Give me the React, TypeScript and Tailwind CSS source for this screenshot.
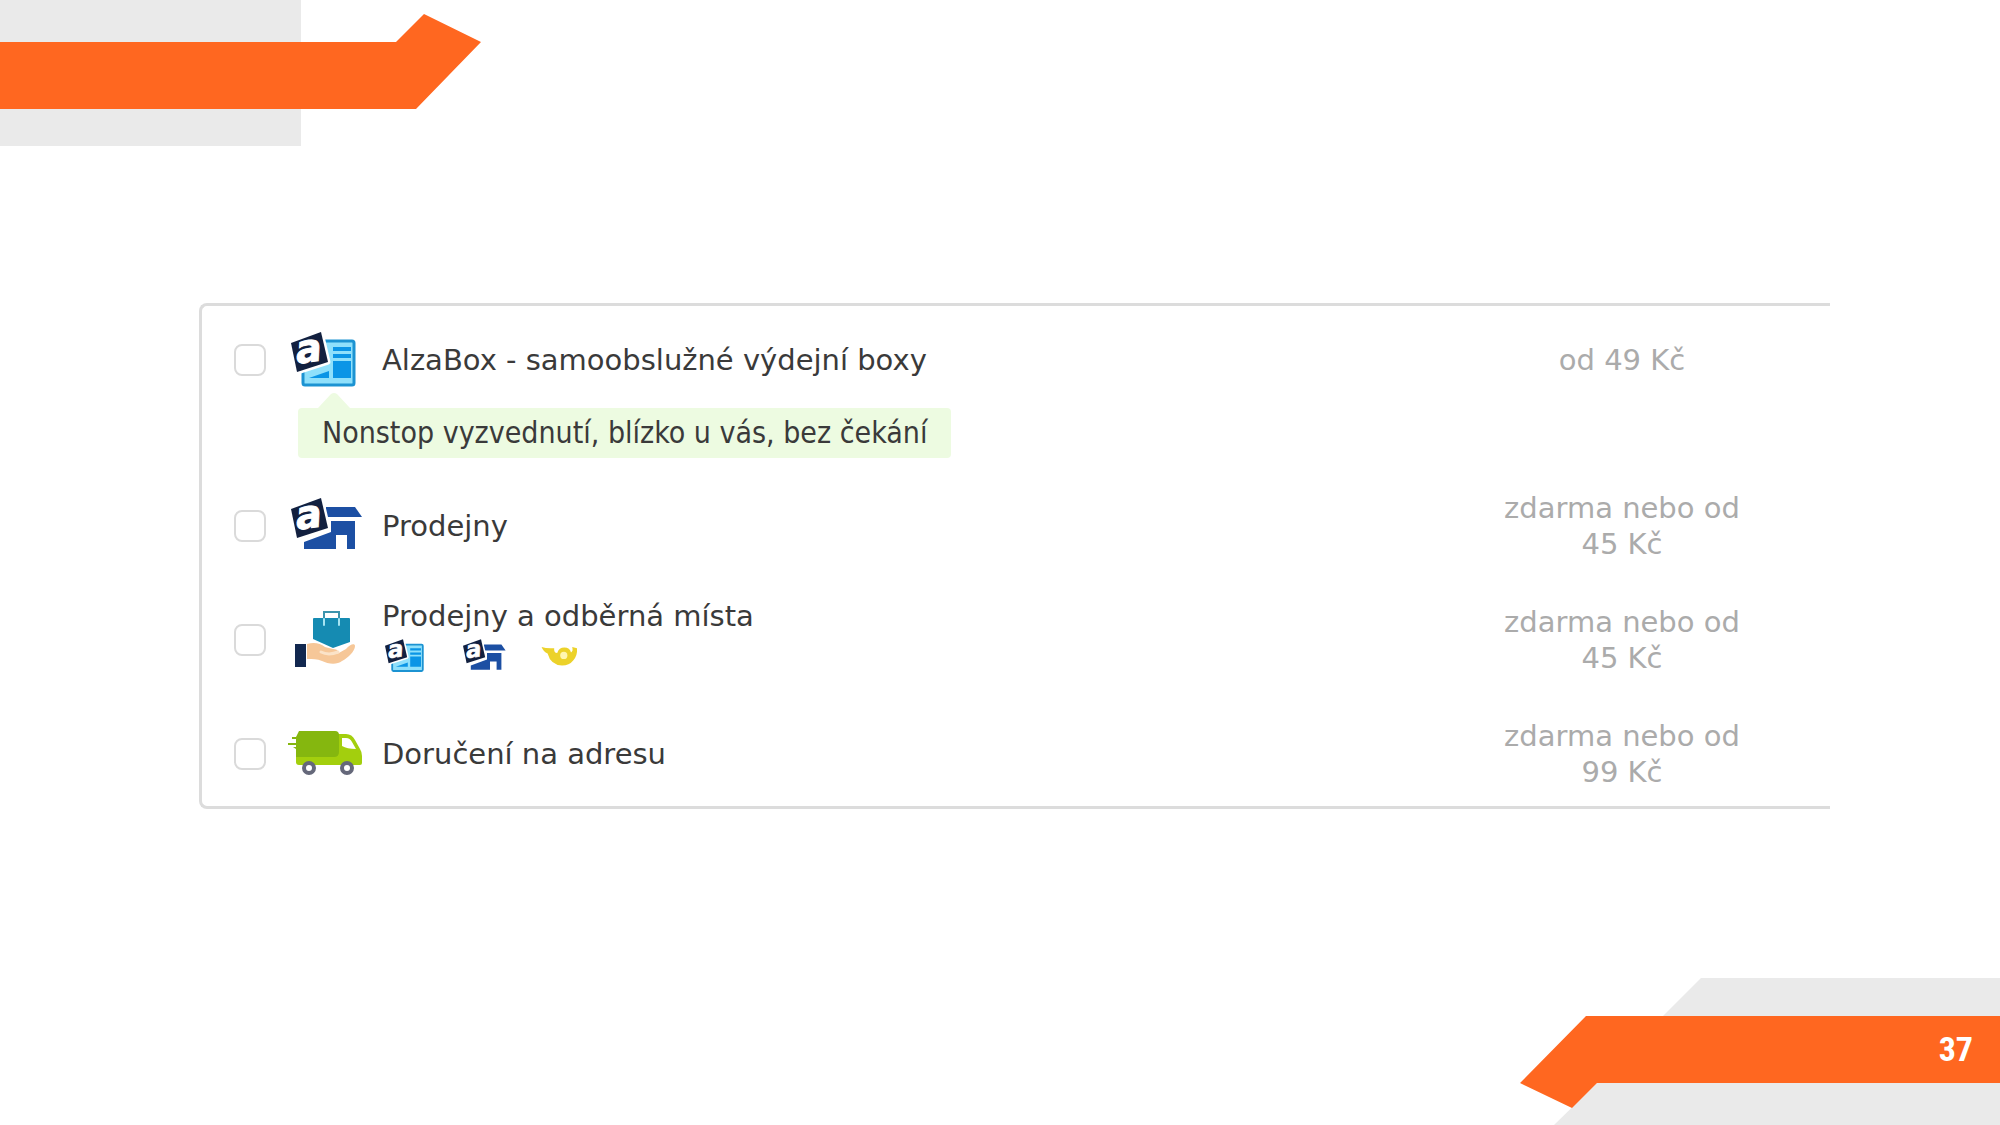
import type { ReactNode } from 'react';
import clsx from 'clsx';

function LogoTile() {
  return (
    <>
      <path d="M1 13 31 2l7 30L7 42Z" fill="#12203f" stroke="#fff" strokeWidth="5" strokeLinejoin="round" paintOrder="stroke" />
      <text
        x="19"
        y="32"
        textAnchor="middle"
        transform="rotate(-8 19 22)"
        fontSize="39"
        fontWeight="700"
        fontStyle="italic"
        fill="#fff"
        stroke="#fff"
        className="font-['DejaVu_Sans',sans-serif]"
      >
        a
      </text>
    </>
  );
}

function BoxIcon({ className }: { className: string }) {
  return (
    <svg viewBox="0 0 72 60" className={clsx('overflow-visible', className)} aria-hidden="true">
      <rect x="13" y="11" width="51" height="44" rx="2" fill="#8fe0fb" stroke="#1c93d2" strokeWidth="3" />
      <path d="M43 17h18v4H43zM43 24h18v4H43zM43 31h18v17H43zM19 48l20-7v7z" fill="#0b95e6" />
      <LogoTile />
    </svg>
  );
}

function StoreIcon({ className }: { className: string }) {
  return (
    <svg viewBox="0 0 72 60" className={clsx('overflow-visible', className)} aria-hidden="true">
      <path d="M36 11h29l7 10H36z" fill="#1c4fa3" />
      <path d="M41 25h24v28h-8V39H46v14H14v-7l27-10z" fill="#1c4fa3" />
      <LogoTile />
    </svg>
  );
}

function PickupIcon({ className }: { className: string }) {
  return (
    <svg viewBox="0 0 72 60" className={className} aria-hidden="true">
      <path d="M34 9V2h15v7" fill="none" stroke="#3d94ad" strokeWidth="2" />
      <path d="M23 9q0-1 1-1h35q1 0 1 1v23L43 38 23 29z" fill="#158bb2" />
      <path d="M34 9v6M49 9v6" fill="none" stroke="#a5e4f2" strokeWidth="2" strokeLinecap="round" />
      <rect x="5" y="34" width="11" height="23" fill="#12284f" />
      <path d="M17 34c7-2 13-1 18 3l8 2c5 0 6 3 4 5l9-5c4-5 9-6 9-3 0 5-7 12-13 15-5 4-14 3-20 0-5-2-9-2-15-2z" fill="#f6c798" />
      <path d="M31 42c6 3 12 2 17 0" fill="none" stroke="#fbe3c8" strokeWidth="3" strokeLinecap="round" />
    </svg>
  );
}

function TruckIcon({ className }: { className: string }) {
  return (
    <svg viewBox="0 0 72 60" className={clsx('overflow-visible', className)} aria-hidden="true">
      <path d="M6 31h42V10h8q6 0 9 6l5 9q2 3 2 7v7q0 2-2 2H9q-3 0-3-3z" fill="#a3cf0d" />
      <path d="M9 7h36q4 0 4 4v17q0 5-5 5H6V25l-3-2h3v-2h-8v-2h8v-4H2v-2h4z" fill="#85b70f" />
      <path d="M52 14h4q4 0 6 4l4 7q-9 0-14-3z" fill="#fff" />
      <g fill="#fff" stroke="#65687a" strokeWidth="4">
        <circle cx="19" cy="44" r="5" />
        <circle cx="57" cy="44" r="5" />
      </g>
    </svg>
  );
}

function HornIcon({ className }: { className: string }) {
  return (
    <svg viewBox="0 0 72 60" className={className} aria-hidden="true">
      <path d="M2 15q9 3 21 2-1 8 5 8 3-9 12-9 9 0 11 8 4-2 2-9l8 2q1 12-6 20-7 9-19 9-19-1-24-20Q5 23 2 15z" fill="#ecd22a" />
      <circle cx="39" cy="29" r="6" fill="#fff6b0" />
    </svg>
  );
}

type Option = {
  id: string;
  title: string;
  price: string;
  icon: ReactNode;
  note?: string;
  partners?: ReactNode;
};

const options: Option[] = [
  {
    id: 'alzabox',
    title: 'AlzaBox - samoobslužné výdejní boxy',
    price: 'od 49 Kč',
    icon: <BoxIcon className="h-15 w-18" />,
    note: 'Nonstop vyzvednutí, blízko u vás, bez čekání',
  },
  {
    id: 'stores',
    title: 'Prodejny',
    price: 'zdarma nebo od 45 Kč',
    icon: <StoreIcon className="h-15 w-18" />,
  },
  {
    id: 'pickup',
    title: 'Prodejny a odběrná místa',
    price: 'zdarma nebo od 45 Kč',
    icon: <PickupIcon className="h-15 w-18" />,
    partners: (
      <span className="flex gap-[34px] pl-0.5">
        <BoxIcon className="h-9 w-11" />
        <StoreIcon className="h-9 w-11" />
        <HornIcon className="h-9 w-11" />
      </span>
    ),
  },
  {
    id: 'address',
    title: 'Doručení na adresu',
    price: 'zdarma nebo od 99 Kč',
    icon: <TruckIcon className="h-15 w-18" />,
  },
];

function DeliveryOption({ id, title, price, icon, note, partners }: Option) {
  return (
    <li>
      <div className="flex h-[92px] items-center pr-20 pl-8">
        <input
          id={id}
          type="checkbox"
          className="size-8 shrink-0 appearance-none rounded-lg border-2 border-[#dadada] bg-white checked:bg-[#85b70f]"
        />
        <label htmlFor={id} className="ml-6 flex flex-1 items-center gap-5">
          <span className="shrink-0">{icon}</span>
          <span className={clsx('flex flex-col gap-1', partners && 'pb-2')}>
            <span>{title}</span>
            {partners}
          </span>
        </label>
        <span className="w-64 shrink-0 text-center text-[#ababab]">{price}</span>
      </div>
      {note && (
        <div className="relative mt-0.5 ml-24 flex h-[50px] w-fit items-center rounded-sm bg-[#edfbe1] px-6 font-['DejaVu_Sans_Condensed','Noto_Sans',sans-serif] text-[30px]">
          <svg viewBox="0 0 32 16" className="absolute -top-4 left-5 h-4 w-8" aria-hidden="true">
            <path d="M0 16 13 2q3-2 6 0l13 14z" fill="#edfbe1" />
          </svg>
          {note}
        </div>
      )}
    </li>
  );
}

export default function App() {
  return (
    <div className="flex min-h-screen flex-col bg-white">
      <header>
        <svg viewBox="0 0 500 146" className="h-[146px] w-[500px]" aria-hidden="true">
          <path d="M0 0h301v146H0z" fill="#eaeaea" />
          <path d="M0 42h396l28-28 57 28-65 67H0z" fill="#ff6720" />
        </svg>
      </header>

      <main className="flex flex-1 flex-col justify-center pt-1.5 pr-[170px] pl-[199px]">
        <ul className="flex flex-col gap-[22px] rounded-l-lg border-[3px] border-r-0 border-[#dcdcdc] pt-2 pb-1.5 font-['DejaVu_Sans',sans-serif] text-[29px] leading-9 text-[#3a3a3a]">
          {options.map((option) => (
            <DeliveryOption key={option.id} {...option} />
          ))}
        </ul>
      </main>

      <footer className="grid justify-end">
        <svg viewBox="0 0 500 165" className="col-start-1 row-start-1 h-[165px] w-[500px]" aria-hidden="true">
          <path d="M201 18h299v38H163zM97 123h403v42H54z" fill="#eaeaea" />
          <path d="M86 56h414v67H97l-25 25-52-25z" fill="#ff6720" />
        </svg>
        <span className="col-start-1 row-start-1 mt-14 flex h-[67px] items-center justify-self-end pr-[27px] font-['Roboto_Condensed','Liberation_Sans_Narrow',Roboto,sans-serif] text-[34px] font-bold text-white">
          37
        </span>
      </footer>
    </div>
  );
}
